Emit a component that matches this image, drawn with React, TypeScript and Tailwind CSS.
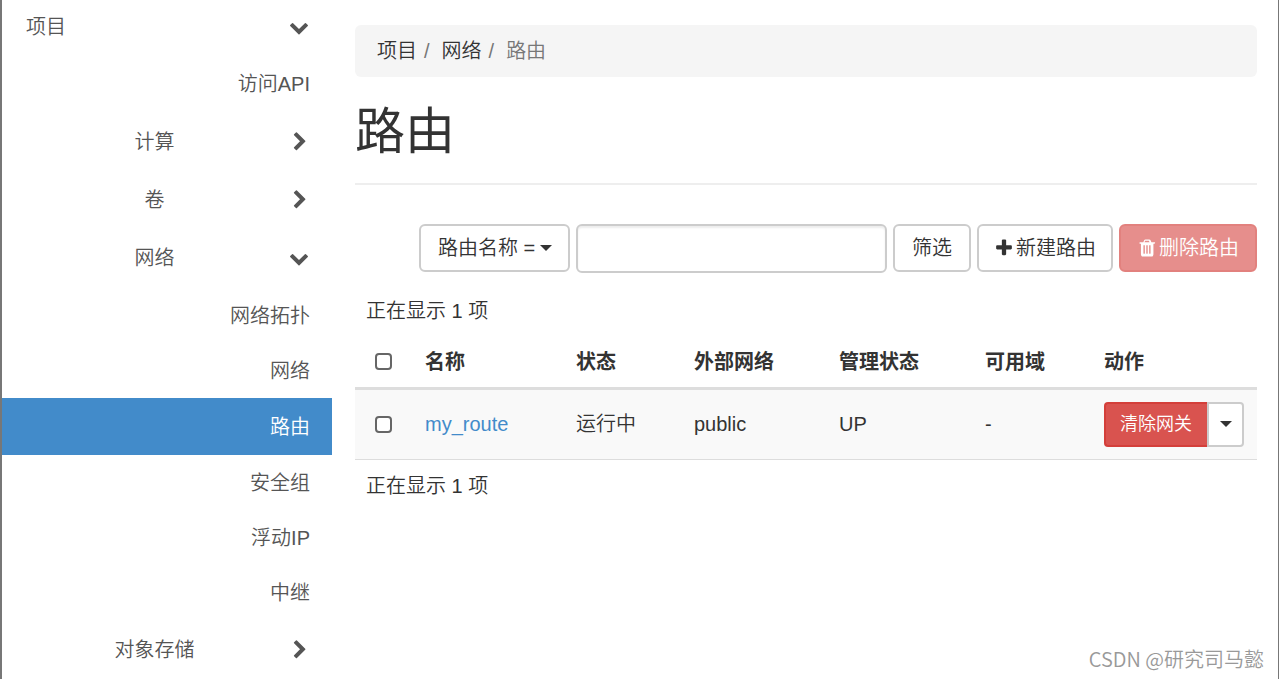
import { useState } from 'react'
import clsx from 'clsx'

const icons = {
  down: 'M1683 808l-742 741q-19 19-45 19t-45-19L109 808q-19-19-19-45.5T109 718l166-165q19-19 45-19t45 19l531 531 531-531q19-19 45-19t45 19l166 165q19 18 19 44.5t-19 45.5z',
  right: 'M1453 877l-742 742q-19 19-45 19t-45-19l-166-166q-19-19-19-45t19-45l531-531-531-531q-19-19-19-45t19-45L621 45q19-19 45-19t45 19l742 742q19 19 19 45t-19 45z',
  plus: 'M1600 736v192q0 40-28 68t-68 28h-416v416q0 40-28 68t-68 28H800q-40 0-68-28t-28-68v-416H288q-40 0-68-28t-28-68V736q0-40 28-68t68-28h416V224q0-40 28-68t68-28h192q40 0 68 28t28 68v416h416q40 0 68 28t28 68z',
  trash:
    'M704 1376V672q0-14-9-23t-23-9h-64q-14 0-23 9t-9 23v704q0 14 9 23t23 9h64q14 0 23-9t9-23zm256 0V672q0-14-9-23t-23-9h-64q-14 0-23 9t-9 23v704q0 14 9 23t23 9h64q14 0 23-9t9-23zm256 0V672q0-14-9-23t-23-9h-64q-14 0-23 9t-9 23v704q0 14 9 23t23 9h64q14 0 23-9t9-23zm-544-992h448l-48-117q-7-9-17-11H738q-10 2-17 11zm928 32v64q0 14-9 23t-23 9h-96v948q0 83-47 143.5t-113 60.5H512q-66 0-113-58.5T352 1464V512h-96q-14 0-23-9t-9-23v-64q0-14 9-23t23-9h309l70-167q15-37 54-63t79-26h320q40 0 79 26t54 63l70 167h309q14 0 23 9t9 23z',
}

function Icon({ name }: { name: keyof typeof icons }) {
  return (
    <svg viewBox="0 0 1792 1792" className="h-5 w-5 shrink-0" fill="currentColor" aria-hidden="true">
      <path d={icons[name]} />
    </svg>
  )
}

function Caret({ className }: { className?: string }) {
  return (
    <svg viewBox="0 0 12 6" className={clsx('h-1.5 w-3', className)} fill="currentColor" aria-hidden="true">
      <path d="M0 0h12L6 6z" />
    </svg>
  )
}

const networkItems = [
  { name: '网络拓扑', href: '#topology' },
  { name: '网络', href: '#networks' },
  { name: '路由', href: '#routers' },
  { name: '安全组', href: '#security-groups' },
  { name: '浮动IP', href: '#floating-ips' },
  { name: '中继', href: '#trunks' },
]

const routers = [
  { name: 'my_route', status: '运行中', network: 'public', admin: 'UP', zone: '-' },
]

type GroupProps = { name: string; open?: boolean; onToggle?: () => void }

function GroupButton({ name, open = false, onToggle }: GroupProps) {
  return (
    <button
      type="button"
      aria-expanded={open}
      onClick={onToggle}
      className="flex h-[58px] w-full items-center pl-[22px] pr-[19px]"
    >
      <span className="flex-1 pt-0.5 text-center">{name}</span>
      <span className="flex w-7 justify-center pt-0.5">
        <Icon name={open ? 'down' : 'right'} />
      </span>
    </button>
  )
}

function Sidebar() {
  const [networkOpen, setNetworkOpen] = useState(true)

  return (
    <nav className="w-[330px] shrink-0 text-[#555]" aria-label="项目">
      <button type="button" aria-expanded="true" className="flex h-[53px] w-full items-center justify-between pl-6 pr-[23px]">
        <span>项目</span>
        <Icon name="down" />
      </button>
      <a href="#api" className="mt-[3px] flex h-14 items-center justify-end pr-[22px]">
        访问API
      </a>
      <GroupButton name="计算" />
      <GroupButton name="卷" />
      <GroupButton name="网络" open={networkOpen} onToggle={() => setNetworkOpen(!networkOpen)} />
      {networkOpen && (
        <ul className="pt-0.5">
          {networkItems.map((item) => (
            <li key={item.name}>
              <a
                href={item.href}
                className={clsx(
                  'flex items-center justify-end pr-[22px]',
                  item.href === '#routers' ? 'h-[57px] bg-[#428bca] text-white' : 'h-[55px]'
                )}
              >
                {item.name}
              </a>
            </li>
          ))}
        </ul>
      )}
      <GroupButton name="对象存储" />
    </nav>
  )
}

function Toolbar() {
  return (
    <div className="flex items-start justify-end gap-1.5">
      <div className="relative">
        <select
          aria-label="筛选条件"
          className="h-12 w-[151px] appearance-none rounded-md border-2 border-[#ccc] bg-white pl-[17px]"
        >
          <option>路由名称 =</option>
        </select>
        <Caret className="pointer-events-none absolute right-[18px] top-[21px]" />
      </div>
      <input
        type="text"
        aria-label="路由名称"
        className="h-[49px] w-[311px] rounded-md border-2 border-[#ccc] bg-white px-4 shadow-[inset_0_2px_2px_rgba(0,0,0,0.075)]"
      />
      <button type="button" className="h-12 rounded-md border-2 border-[#ccc] bg-white px-[17px]">
        筛选
      </button>
      <button type="button" className="flex h-12 items-center rounded-md border-2 border-[#ccc] bg-white px-[15px]">
        <Icon name="plus" />
        <span className="ml-0.5">新建路由</span>
      </button>
      <button
        type="button"
        disabled
        className="flex h-12 items-center rounded-md border-2 border-[#d43f3a] bg-[#d9534f] px-4 text-white opacity-65"
      >
        <Icon name="trash" />
        <span className="ml-0.5">删除路由</span>
      </button>
    </div>
  )
}

const checkboxClass = 'block h-[17px] w-[17px] appearance-none rounded-[4px] border-2 border-[#666] bg-white checked:bg-[#428bca]'

function RouterTable() {
  return (
    <table className="w-full border-collapse text-left">
      <caption className="h-12 pl-[11px] text-left leading-[50px]">正在显示 1 项</caption>
      <colgroup>
        <col className="w-[59px]" />
        <col className="w-[151px]" />
        <col className="w-[118px]" />
        <col className="w-[145px]" />
        <col className="w-[146px]" />
        <col className="w-[119px]" />
        <col className="w-[164px]" />
      </colgroup>
      <thead>
        <tr className="h-[54px] border-b-3 border-[#ddd]">
          <th className="pl-5 pt-0.5">
            <input type="checkbox" aria-label="全选" className={checkboxClass} />
          </th>
          <th className="pl-[11px] pt-1">名称</th>
          <th className="pl-[11px] pt-1">状态</th>
          <th className="pl-[11px] pt-1">外部网络</th>
          <th className="pl-[11px] pt-1">管理状态</th>
          <th className="pl-[11px] pt-1">可用域</th>
          <th className="pl-[11px] pt-1">动作</th>
        </tr>
      </thead>
      <tbody>
        {routers.map((router) => (
          <tr key={router.name} className="h-[71px] border-b border-[#ddd] bg-[#f9f9f9]">
            <td className="pl-5">
              <input type="checkbox" aria-label={router.name} className={checkboxClass} />
            </td>
            <td className="pl-[11px]">
              <a href="#my_route" className="text-[#428bca]">{router.name}</a>
            </td>
            <td className="pl-[11px]">{router.status}</td>
            <td className="pl-[11px]">{router.network}</td>
            <td className="pl-[11px]">{router.admin}</td>
            <td className="pl-[11px]">{router.zone}</td>
            <td className="pl-[11px]">
              <div className="flex">
                <button
                  type="button"
                  className="h-[45px] rounded-l-[4px] border-2 border-r-0 border-[#d43f3a] bg-[#d9534f] pl-[14px] pr-[15px] text-lg text-white"
                >
                  清除网关
                </button>
                <button
                  type="button"
                  aria-label="更多操作"
                  className="flex h-[45px] w-[37px] items-center justify-center rounded-r-[4px] border-2 border-[#ccc] bg-white"
                >
                  <Caret />
                </button>
              </div>
            </td>
          </tr>
        ))}
      </tbody>
    </table>
  )
}

export default function App() {
  return (
    <div className="relative flex min-h-screen border-l-2 border-r border-[#777] bg-white font-['Liberation_Sans','Noto_Sans_CJK_SC',sans-serif] text-[20px] leading-7 font-[350] text-[#333]">
      <Sidebar />
      <main className="min-w-0 flex-1 pl-[23px] pr-[21px] pt-[25px]">
        <ol className="flex rounded-md bg-[#f5f5f5] px-[22px] py-3 text-[#777]">
          <li>
            <a href="#project" className="text-[#333]">项目</a>
            <span className="pl-[7px] pr-3">/</span>
          </li>
          <li>
            <a href="#network" className="text-[#333]">网络</a>
            <span className="pl-[7px] pr-3">/</span>
          </li>
          <li aria-current="page">路由</li>
        </ol>
        <h1 className="mb-[39px] border-b-2 border-[#eee] pb-5 pt-6 text-[50px] leading-[62px] font-normal">路由</h1>
        <Toolbar />
        <div className="pt-[13px]">
          <RouterTable />
          <p className="pl-[11px] pt-3">正在显示 1 项</p>
        </div>
      </main>
      <div className="absolute bottom-1.5 right-[14px] font-['Noto_Sans_CJK_SC',sans-serif] text-[20px] leading-7 text-[#999]">CSDN @研究司马懿</div>
    </div>
  )
}
